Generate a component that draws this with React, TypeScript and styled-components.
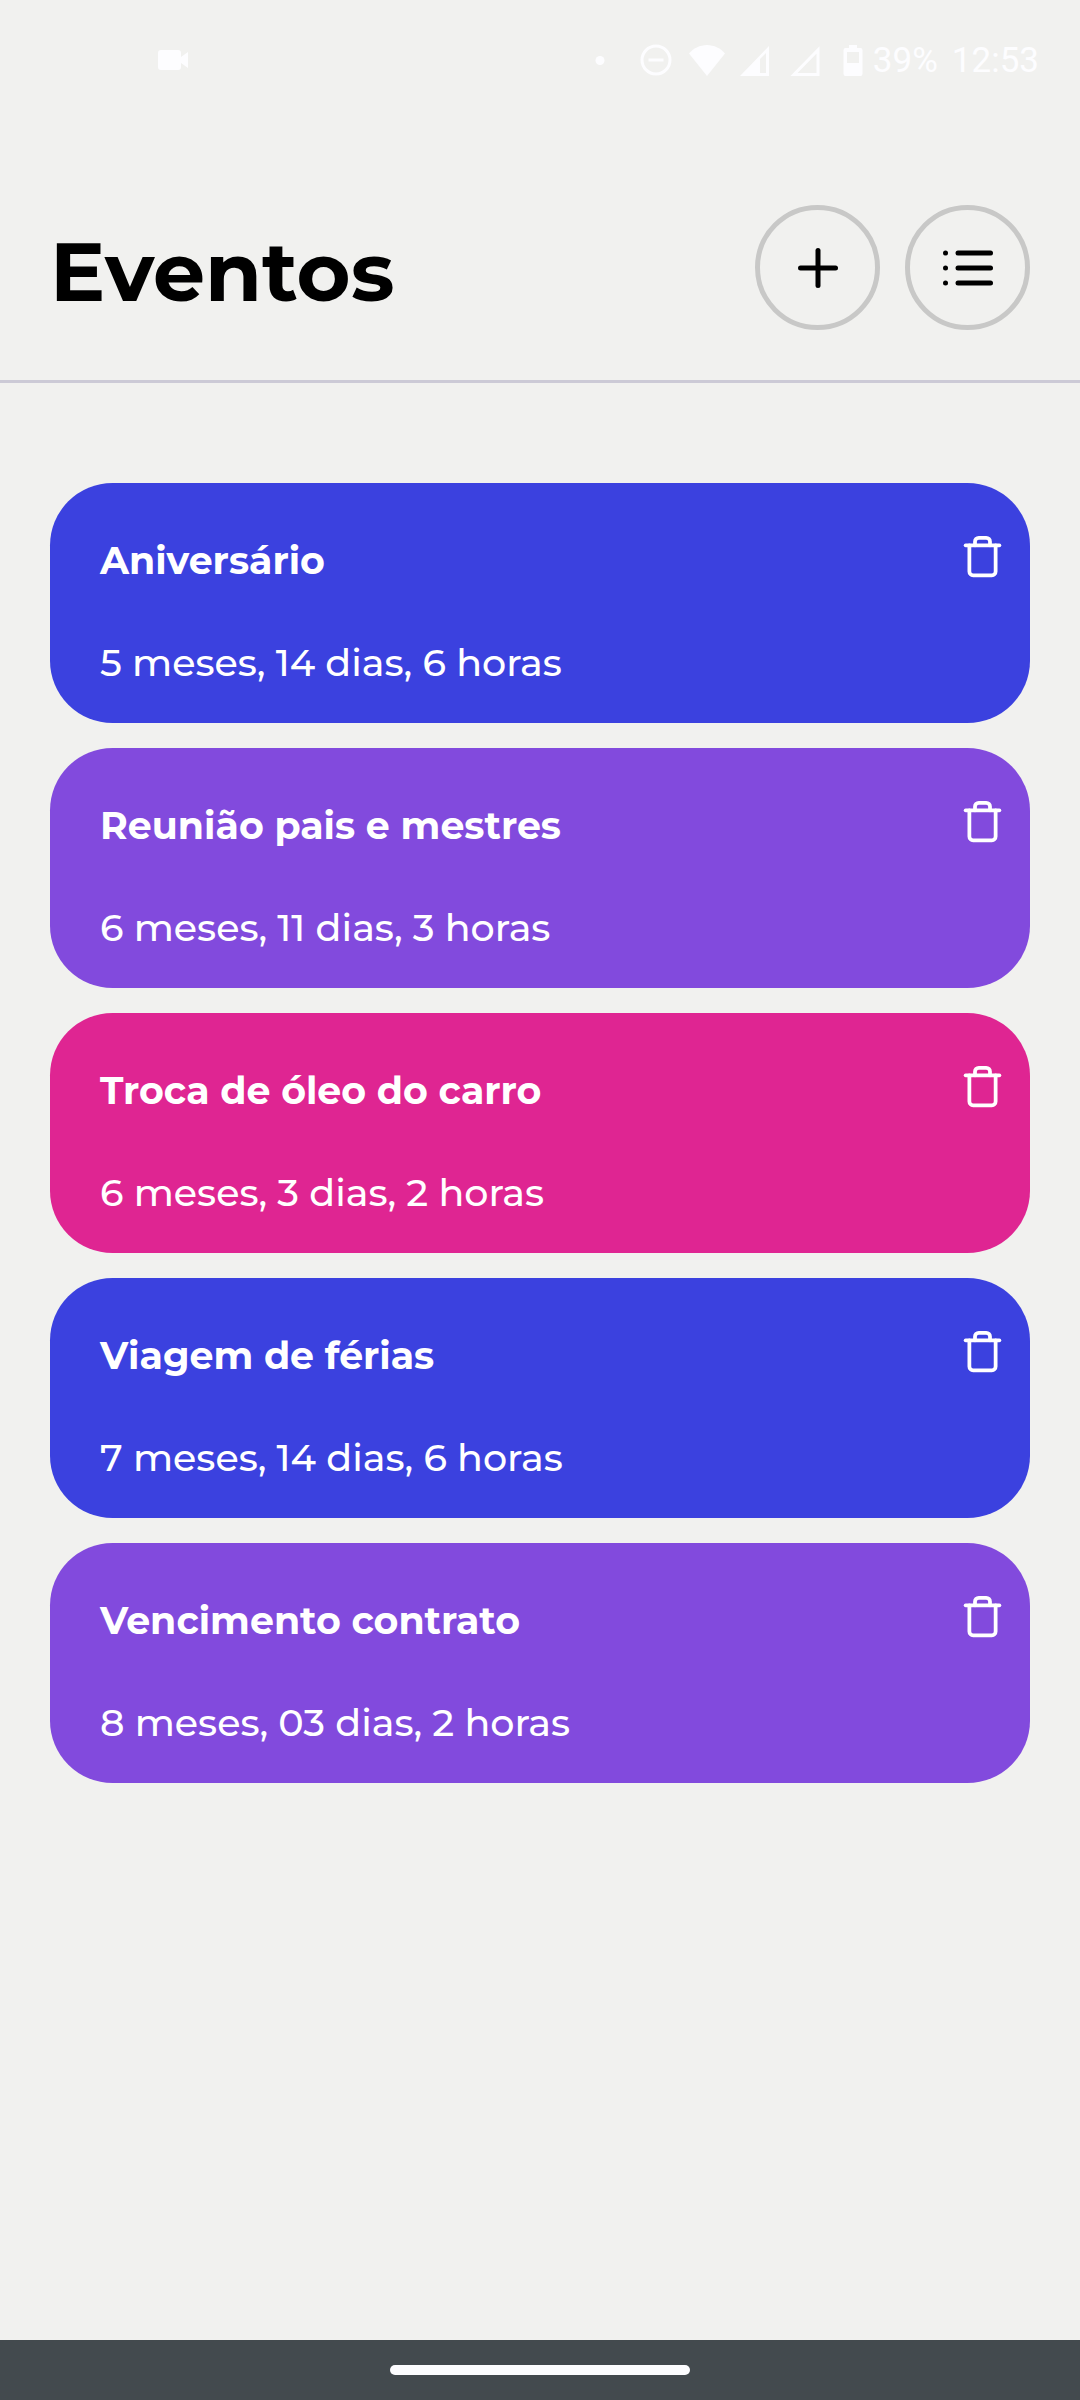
import React from "react";
import styled, { createGlobalStyle } from "styled-components";
import { FiList, FiPlus, FiTrash } from "react-icons/fi";

const GlobalStyle = createGlobalStyle`
  * { box-sizing: border-box; }
  body { margin: 0; background: #f1f1ef; }
  h1, h2, p { margin: 0; }
  button { padding: 0; background: none; font: inherit; color: inherit; }
`;

const Screen = styled.div`
  display: flex;
  flex-direction: column;
  width: 1080px;
  height: 2400px;
  background: #f1f1ef;
  font-family: Montserrat, Inter, sans-serif;
`;

const StatusBar = styled.div`
  display: flex;
  align-items: center;
  justify-content: space-between;
  height: 120px;
  padding: 0 41px 0 158px;
  color: #fdfdff;
`;

const StatusIcons = styled.svg`
  display: block;
`;

const StatusGroup = styled.div`
  display: flex;
  align-items: center;
  font-family: Roboto, sans-serif;
  font-size: 35px;
  line-height: 40px;
`;

const Battery = styled.span`
  margin-left: 10px;
  padding-top: 2px;
`;

const Clock = styled.span`
  margin-left: 14px;
  padding-top: 2px;
`;

const Header = styled.header`
  display: flex;
  align-items: center;
  justify-content: space-between;
  height: 263px;
  padding: 35px 50px 0;
  border-bottom: 3px solid #cccad6;
`;

const Title = styled.h1`
  padding-top: 8px;
  font-size: 82.5px;
  font-weight: 700;
  line-height: 98px;
  color: #000;
`;

const Actions = styled.div`
  display: flex;
  gap: 25px;
`;

const RoundButton = styled.button`
  display: flex;
  align-items: center;
  justify-content: center;
  width: 125px;
  height: 125px;
  border: 5px solid #c8c8c7;
  border-radius: 50%;
  color: #000;
`;

const EventList = styled.main`
  display: flex;
  flex: 1;
  flex-direction: column;
  gap: 25px;
  padding: 100px 50px 0;
`;

const Card = styled.article<{ $color: string }>`
  display: flex;
  align-items: flex-start;
  justify-content: space-between;
  height: 240px;
  padding: 50px 25px 0 50px;
  border-radius: 62.5px;
  background: ${(p) => p.$color};
  color: #fff;
`;

const CardText = styled.div`
  display: flex;
  flex-direction: column;
  gap: 52px;
  padding-top: 3px;
`;

const EventName = styled.h2`
  font-size: 37.9px;
  font-weight: 700;
  line-height: 50px;
  white-space: nowrap;
`;

const Remaining = styled.p`
  font-size: 38px;
  font-weight: 500;
  line-height: 50px;
  white-space: nowrap;
`;

const DeleteButton = styled.button`
  display: flex;
  padding-top: 0.5px;
  border: 0;
`;

const NavigationBar = styled.footer`
  display: flex;
  align-items: center;
  justify-content: center;
  height: 60px;
  background: #434a4e;
`;

const HomeHandle = styled.div`
  width: 300px;
  height: 10px;
  border-radius: 5px;
  background: #fdfdff;
`;

const events = [
  { name: "Aniversário", left: "5 meses, 14 dias, 6 horas", color: "#3b41df" },
  { name: "Reunião pais e mestres", left: "6 meses, 11 dias, 3 horas", color: "#824add" },
  { name: "Troca de óleo do carro", left: "6 meses, 3 dias, 2 horas", color: "#df2592" },
  { name: "Viagem de férias", left: "7 meses, 14 dias, 6 horas", color: "#3b41df" },
  { name: "Vencimento contrato", left: "8 meses, 03 dias, 2 horas", color: "#824add" },
];

export default function App() {
  return (
    <Screen>
      <GlobalStyle />
      <StatusBar>
        <StatusIcons width="30" height="22" viewBox="0 0 30 22" fill="currentColor">
          <path d="M3 1h17a3 3 0 0 1 3 3v4l7-5v16l-7-5v4a3 3 0 0 1-3 3H3a3 3 0 0 1-3-3V4a3 3 0 0 1 3-3z" />
        </StatusIcons>
        <StatusGroup>
          <StatusIcons width="268" height="34" viewBox="595 42 268 34" fill="currentColor">
            <circle cx="600" cy="59.5" r="4.5" />
            <circle cx="656" cy="59" r="14" fill="none" stroke="currentColor" strokeWidth="3" />
            <path d="M648.5 57.5h15v3h-15z" />
            <path d="M707 75 689 52.5c4-5 11-8.500 18-8.500s14 3.500 18 8.500z" />
            <path fillRule="evenodd" d="M769 45v30h-29zM766 52v20h-6V58z" />
            <path fill="none" stroke="currentColor" strokeWidth="3" d="M818 49v24.500h-24z" />
            <path fillRule="evenodd" d="M849 44h8v3h3.500a2 2 0 0 1 2 2v24a2 2 0 0 1-2 2h-15a2 2 0 0 1-2-2V49a2 2 0 0 1 2-2h3.500zM847 51v11h12V51z" />
          </StatusIcons>
          <Battery>39%</Battery>
          <Clock>12:53</Clock>
        </StatusGroup>
      </StatusBar>
      <Header>
        <Title>Eventos</Title>
        <Actions>
          <RoundButton aria-label="Adicionar">
            <FiPlus size={60} />
          </RoundButton>
          <RoundButton aria-label="Lista">
            <FiList size={60} />
          </RoundButton>
        </Actions>
      </Header>
      <EventList>
        {events.map((e) => (
          <Card key={e.name} $color={e.color}>
            <CardText>
              <EventName>{e.name}</EventName>
              <Remaining>{e.left}</Remaining>
            </CardText>
            <DeleteButton aria-label="Excluir">
              <FiTrash size={45} />
            </DeleteButton>
          </Card>
        ))}
      </EventList>
      <NavigationBar>
        <HomeHandle />
      </NavigationBar>
    </Screen>
  );
}
